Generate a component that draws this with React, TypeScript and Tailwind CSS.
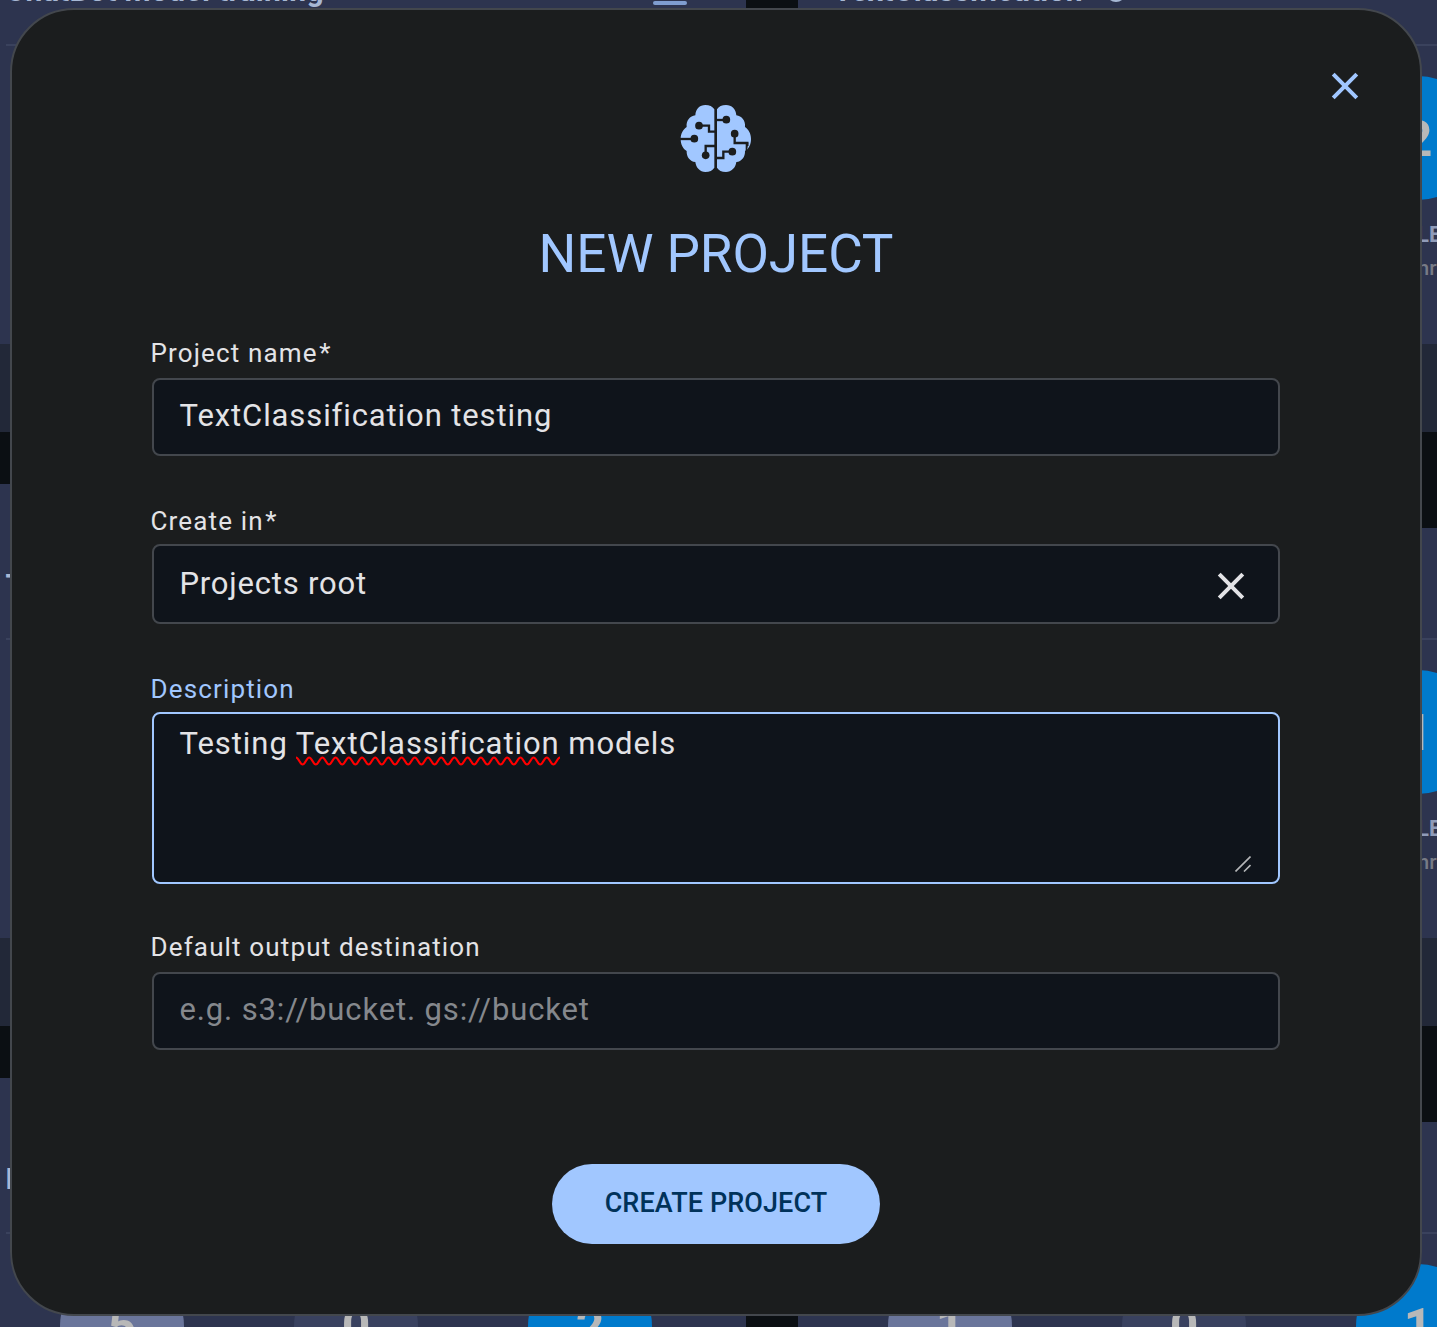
import React from "react";

type Stat = { value?: number; label?: string; note?: string; tone: "slate" | "navy" | "blue" };
type Project = { title: string; shared?: boolean; stats: Stat[] };

const idle: Stat[] = [{ tone: "slate" }, { tone: "navy" }, { tone: "blue" }];

const withCompleted = (value: number): Stat[] => [
  { tone: "slate" },
  { tone: "navy" },
  { value, label: "COMPLETED", note: "(24 hrs)", tone: "blue" },
];

const rows: Project[][] = [
  [
    { title: "ChatBot model training", stats: idle },
    { title: "TextClassification", shared: true, stats: withCompleted(2) },
  ],
  [
    { title: "T", stats: idle },
    { title: "", stats: withCompleted(1) },
  ],
  [
    {
      title: "P",
      stats: [
        { value: 5, tone: "slate" },
        { value: 0, tone: "navy" },
        { value: 2, tone: "blue" },
      ],
    },
    {
      title: "",
      stats: [
        { value: 1, tone: "slate" },
        { value: 0, tone: "navy" },
        { value: 1, tone: "blue" },
      ],
    },
  ],
];

const tones = {
  slate: "bg-[#6a759b]",
  navy: "bg-[#39415f]",
  blue: "bg-[#007acc]",
};

function ProjectCard({ project }: { project: Project }) {
  return (
    <div className="flex h-[542px] w-[776px] shrink-0 flex-col">
      <div className="h-11 w-[360px] rounded-t-xl bg-[#2d344f]" />
      <div className="h-[410px] bg-[#2d344f]">
        <div className="mx-9 flex h-[112px] items-center border-b-2 border-[#3a425d] pt-1">
          <span className="-ml-[0.4px] grow text-[30px] leading-9 font-bold tracking-[0.33px] whitespace-nowrap text-[#a7b8d4]">
            {project.title}
            {project.shared && (
              <span className="ml-[23px] inline-block size-5 rounded-full border-[3px] border-[#a7b8d4] align-[-1px]" />
            )}
          </span>
          <span className="mr-[23px] flex w-[34px] flex-col gap-[7px] pt-0.5">
            <i className="h-1 rounded-full bg-[#7f9dd0]" />
            <i className="h-1 rounded-full bg-[#7f9dd0]" />
            <i className="h-1 rounded-full bg-[#7f9dd0]" />
          </span>
        </div>
        <div className="flex justify-between pt-[30px] pr-[94px] pl-[90px]">
          {project.stats.map((s) => (
            <div key={s.tone} className="flex w-[124px] flex-col items-center">
              <div
                className={`flex size-[124px] items-center justify-center rounded-full pt-0.5 text-[50px] font-bold text-[#b8b8b8] ${tones[s.tone]}`}
              >
                {s.value}
              </div>
              <div className="mt-[21px] text-[22px] leading-7 font-bold whitespace-nowrap text-[#8f9bb8]">{s.label}</div>
              <div className="mt-[5px] text-[21px] leading-7 font-medium whitespace-nowrap text-[#777b86]">{s.note}</div>
            </div>
          ))}
        </div>
      </div>
      <div className="h-[88px] bg-[#222838]" />
    </div>
  );
}

function BrainIcon() {
  return (
    <svg className="h-[68px] w-[72px]" viewBox="60 45 216 204" aria-hidden="true">
      <g fill="#a1c7ff">
        <path d="M163 58V233C158 241 149 246 136 246C120 246 108 233 106 216C90 215 79 200 80 183C68 176 62 163 62 147C62 131 69 119 80 111C78 92 90 78 106 76C107 57 119 45 136 45C148 45 158 49 163 58Z" />
        <path d="M171 58V233C176 241 185 246 198 246C214 246 227 233 229 216C245 215 256 200 255 183C267 176 273 163 273 147C273 131 266 119 255 111C257 92 245 78 229 76C228 57 215 45 198 45C186 45 176 49 171 58Z" />
      </g>
      <g fill="none" stroke="#1b1d1e" strokeWidth="7">
        <path d="M117 107H147V125H166" />
        <path d="M60 147H103" />
        <path d="M137 196V168H166" />
        <path d="M168 90H199" />
        <path d="M224 131V159H262V168" />
        <path d="M168 204H190V185H217" />
      </g>
      <path d="M257 158H265L261 184H257Z" fill="#1b1d1e" />
      <g fill="#1b1d1e">
        <circle cx="117" cy="107" r="11.5" />
        <circle cx="103" cy="146" r="11.5" />
        <circle cx="137" cy="196" r="11.5" />
        <circle cx="199" cy="89" r="11.5" />
        <circle cx="224" cy="131" r="11.5" />
        <circle cx="217" cy="185" r="11.5" />
      </g>
    </svg>
  );
}

function Cross({ className }: { className: string }) {
  return (
    <svg className={className} viewBox="0 0 28 28" fill="none" stroke="currentColor" strokeWidth="4" aria-hidden="true">
      <path d="M2.2 2.2 25.8 25.8M25.8 2.2 2.2 25.8" />
    </svg>
  );
}

const squigglePath =
  "M0 1.5" +
  Array.from({ length: 20 }, (_, i) => {
    const x = i * 13.2;
    return `C${x + 2.6} 1.5 ${x + 4} 8.5 ${x + 6.6} 8.5S${x + 10.6} 1.5 ${x + 13.2} 1.5`;
  }).join("");

function Squiggle() {
  return (
    <svg
      className="absolute top-[31px] left-0 h-[10px] w-[264px]"
      viewBox="0 0 264 10"
      fill="none"
      stroke="#ff0000"
      strokeWidth="2.2"
      aria-hidden="true"
    >
      <path d={squigglePath} />
    </svg>
  );
}

function Field({
  label,
  active,
  required,
  labelClass,
  boxClass,
  children,
}: {
  label: string;
  active?: boolean;
  required?: boolean;
  labelClass: string;
  boxClass: string;
  children: React.ReactNode;
}) {
  return (
    <div>
      <div
        className={`-ml-[1.5px] flex h-[52px] items-center text-[26px] leading-[30px] tracking-[1.15px] ${labelClass} ${
          active ? "text-[#a1c7ff]" : "text-[#e3e3e6]"
        }`}
      >
        {label}
        {required && <span className="ml-[1.5px]">*</span>}
      </div>
      <div
        className={`flex rounded-lg border-2 bg-[#0f141b] px-[25.5px] text-[31px] leading-9 text-[#e3e3e6] ${
          active ? "border-[#a1c7ff]" : "border-[#43474d]"
        } ${boxClass}`}
      >
        {children}
      </div>
    </div>
  );
}

export default function App() {
  return (
    <div className="relative h-[1327px] w-[1437px] overflow-hidden bg-[#0b0f13] font-['Roboto',sans-serif]">
      <div className="-mt-[110px] -ml-[30px] flex flex-col gap-[52px]">
        {rows.map((row, i) => (
          <div key={i} className="flex gap-[52px]">
            {row.map((p, j) => (
              <ProjectCard key={j} project={p} />
            ))}
          </div>
        ))}
      </div>

      <div className="absolute top-2 left-[10px] flex h-[1308px] w-[1412px] flex-col rounded-[64px] border-2 border-[#43474d] bg-[#1b1d1e] px-[140px]">
        <button className="absolute top-[62px] right-[61px] text-[#a1c7ff]" aria-label="Close">
          <Cross className="size-7" />
        </button>
        <div className="flex flex-col items-center pt-[95px]">
          <BrainIcon />
          <h1 className="mt-[49px] text-[53px] leading-[64px] tracking-[-0.05px] text-[#a1c7ff]">NEW PROJECT</h1>
        </div>

        <form className="mt-10 flex flex-col gap-9">
          <Field
            label="Project name"
            required
            labelClass="pt-0.5"
            boxClass="h-[78px] items-center pb-0.5 tracking-[0.9px]"
          >
            TextClassification testing
          </Field>
          <Field
            label="Create in"
            required
            labelClass="pt-1.5"
            boxClass="h-20 items-center justify-between tracking-[0.8px]"
          >
            <span>Projects root</span>
            <Cross className="mt-[3px] mr-2 size-7" />
          </Field>
          <Field
            label="Description"
            active
            labelClass="pt-1.5"
            boxClass="h-[172px] justify-between tracking-[0.94px]"
          >
            <span className="pt-3">
              Testing{" "}
              <span className="relative">
                TextClassification
                <Squiggle />
              </span>{" "}
              models
            </span>
            <svg
              className="mr-0.5 mb-[10.5px] size-4 self-end"
              viewBox="0 0 16 16"
              stroke="#b4b6b8"
              strokeWidth="1.6"
              aria-hidden="true"
            >
              <path d="M0.5 15.5 15.5 0.5M9 15.5 15.5 9" />
            </svg>
          </Field>
          <Field
            label="Default output destination"
            labelClass="pt-0.5"
            boxClass="h-[78px] items-center pb-0.5 tracking-[0.86px]"
          >
            <span className="text-[#85888d]">e.g. s3://bucket. gs://bucket</span>
          </Field>
        </form>

        <button className="mx-auto mt-[114px] h-20 w-[328px] rounded-full bg-[#a1c7ff] pb-0.5 text-[27px] font-medium tracking-[0.1px] text-[#00325a]">
          CREATE PROJECT
        </button>
      </div>
    </div>
  );
}
